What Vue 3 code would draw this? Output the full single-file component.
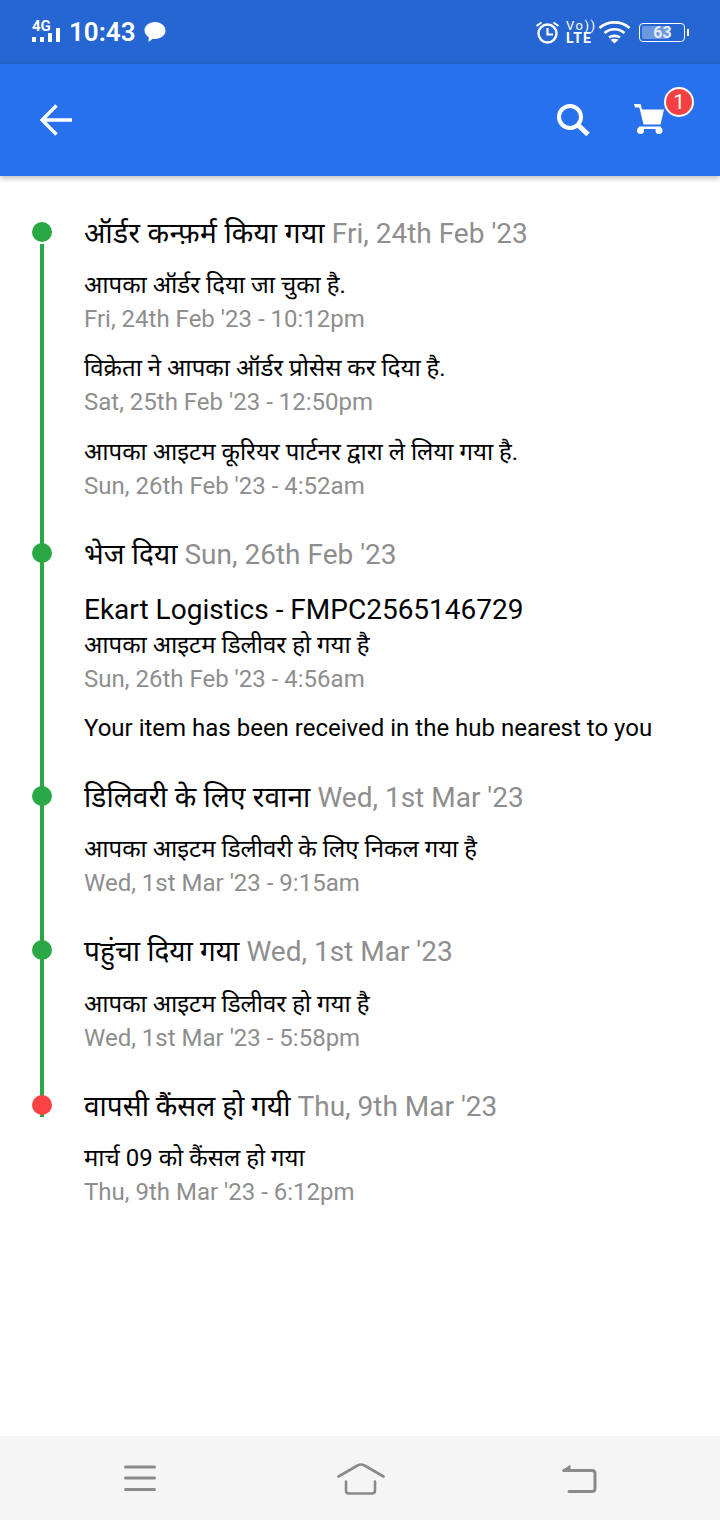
<script setup>
const stages = [
  { title: 'ऑर्डर कन्फ़र्म किया गया', track: 0.38, date: "Fri, 24th Feb '23", color: 'green', items: [
    { text: 'आपका ऑर्डर दिया जा चुका है.', time: "Fri, 24th Feb '23 - 10:12pm" },
    { text: 'विक्रेता ने आपका ऑर्डर प्रोसेस कर दिया है.', time: "Sat, 25th Feb '23 - 12:50pm" },
    { text: 'आपका आइटम कूरियर पार्टनर द्वारा ले लिया गया है.', time: "Sun, 26th Feb '23 - 4:52am" },
  ]},
  { title: 'भेज दिया', track: 0.1, date: "Sun, 26th Feb '23", color: 'green', courier: 'Ekart Logistics - FMPC2565146729', items: [
    { text: 'आपका आइटम डिलीवर हो गया है', time: "Sun, 26th Feb '23 - 4:56am" },
    { text: 'Your item has been received in the hub nearest to you' },
  ]},
  { title: 'डिलिवरी के लिए रवाना', track: 0.2, date: "Wed, 1st Mar '23", color: 'green', items: [
    { text: 'आपका आइटम डिलीवरी के लिए निकल गया है', time: "Wed, 1st Mar '23 - 9:15am" },
  ]},
  { title: 'पहुंचा दिया गया', track: 0.1, date: "Wed, 1st Mar '23", color: 'green', items: [
    { text: 'आपका आइटम डिलीवर हो गया है', time: "Wed, 1st Mar '23 - 5:58pm" },
  ]},
  { title: 'वापसी कैंसल हो गयी', track: 0, date: "Thu, 9th Mar '23", color: 'red', last: true, items: [
    { text: 'मार्च 09 को कैंसल हो गया', time: "Thu, 9th Mar '23 - 6:12pm" },
  ]},
]
</script>

<template>
  <div class="page">
    <div class="status">
      <div class="status-left">
        <svg width="30" height="30" viewBox="0 0 30 30">
          <text x="1" y="14" class="sig-t">4G</text>
          <rect x="1" y="20" width="4" height="5" fill="#fff"/>
          <rect x="9" y="20" width="4" height="5" fill="#fff"/>
          <rect x="17" y="16" width="4" height="9" fill="#fff"/>
          <rect x="25" y="11" width="4" height="14" fill="#fff"/>
        </svg>
        <span class="clock">10:43</span>
        <svg width="22" height="22" viewBox="0 0 22 22"><path d="M11 1c5.800 0 10.500 3.600 10.500 8.500S16.800 18 11 18c-.8 0-1.500-.1-2.200-.2L4.500 21l.3-4.800C2.200 14.700.5 12.300.5 9.500.5 4.600 5.200 1 11 1z" fill="#fff"/></svg>
      </div>
      <div class="status-right">
        <svg width="25" height="24" viewBox="0 0 25 24" fill="none" stroke="#fff">
          <circle cx="12.500" cy="13.500" r="9" stroke-width="2.400"/>
          <path d="M12.500 8v6.500H18" stroke-width="2.200"/>
          <path d="M1.500 6l5-3.500M23.500 6l-5-3.500" stroke-width="2"/>
        </svg>
        <div class="volte"><span class="vo">Vo))</span><span class="lte">LTE</span></div>
        <svg width="33" height="24" viewBox="0 0 33 24" fill="none" stroke="#fff" stroke-width="2.600">
          <path d="M1.500 8C10 .5 23 .5 31.500 8"/>
          <path d="M6.500 13c6-5 14-5 20 0"/>
          <path d="M11 17.500c3-2.200 8-2.200 11 0"/>
          <path d="M16.500 23.500l-4-3.700c2.500-1.500 5.500-1.500 8 0z" fill="#fff" stroke="none"/>
        </svg>
        <div class="battery">
          <div class="batt-body"><div class="batt-fill"></div><span class="batt-num">63</span></div>
          <div class="batt-tip"></div>
        </div>
      </div>
    </div>

    <header class="bar">
      <svg width="36" height="36" viewBox="0 0 36 36" fill="none" stroke="#fff" stroke-width="3.400">
        <path d="M4.500 18H34M18.500 3.500L4.100 18 18.500 32.500"/>
      </svg>
      <div class="bar-right">
        <svg width="36" height="36" viewBox="0 0 36 36" fill="none" stroke="#fff">
          <circle cx="15" cy="15" r="11" stroke-width="4"/>
          <path d="M23 23l10 9.500" stroke-width="5"/>
        </svg>
        <div class="cart">
          <svg width="34" height="34" viewBox="0 0 34 34" fill="#fff">
            <path d="M2 2h6.500L10 7.500h22L28.500 22.500H11.500L7.500 6 6.500 5.500H3z"/>
            <path d="M7 24.500h22V27H7z"/>
            <circle cx="8.500" cy="28.500" r="3.500"/><circle cx="27" cy="28.500" r="3.500"/>
          </svg>
          <span class="badge">1</span>
        </div>
      </div>
    </header>

    <main class="timeline">
      <section v-for="(s, i) in stages" :key="i" class="stage" :class="{ last: s.last }">
        <div class="rail">
          <span class="dot" :class="s.color"></span>
          <span class="line"></span>
        </div>
        <div class="content">
          <h2 class="head"><span :style="{ letterSpacing: s.track + 'px' }">{{ s.title }}</span> <span class="head-date">{{ s.date }}</span></h2>
          <p v-if="s.courier" class="courier">{{ s.courier }}</p>
          <div v-for="(it, j) in s.items" :key="j" class="item">
            <div class="item-text">{{ it.text }}</div>
            <div v-if="it.time" class="item-time">{{ it.time }}</div>
          </div>
        </div>
      </section>
    </main>

    <nav class="nav">
      <svg width="36" height="30" viewBox="0 0 36 30" fill="none" stroke="#8a8a8a" stroke-width="3" stroke-linecap="round">
        <path d="M3.500 4h29M3.500 15h29M3.500 26.500h29"/>
      </svg>
      <svg class="home" width="48" height="34" viewBox="0 0 48 34" fill="none" stroke="#8a8a8a" stroke-width="2.600" stroke-linecap="round" stroke-linejoin="round">
        <path d="M1.500 15.500L20.500 4.500c2.200-1.200 4.800-1.200 7 0L46.500 15.500"/>
        <path d="M9 20.500v9c0 2 1 3 3 3h23c2 0 3-1 3-3v-9"/>
      </svg>
      <svg width="38" height="32" viewBox="0 0 38 32" fill="none" stroke="#8a8a8a" stroke-width="3" stroke-linecap="round" stroke-linejoin="round">
        <path d="M4 8.500h28c2 0 3 1 3 3v15c0 2-1 3-3 3H9"/>
        <path d="M2.500 8.500L10 3.500v5z" fill="#8a8a8a" stroke="#8a8a8a" stroke-width="1"/>
      </svg>
    </nav>
  </div>
</template>

<style>
html, body { margin: 0; background: #fff; }
</style>

<style scoped>
.page {
  width: 720px;
  height: 1520px;
  display: flex;
  flex-direction: column;
  font-family: Roboto, "Noto Sans", sans-serif;
  color: #000;
  background: #fff;
}
.status {
  height: 64px;
  flex: none;
  background: #2566d2;
  display: flex;
  align-items: center;
  justify-content: space-between;
  padding: 0 31px;
  color: #fff;
}
.status-left, .status-right { display: flex; align-items: center; }
.status-left { gap: 8px; }
.status-right { gap: 6px; }
.sig-t { font: 700 15px Roboto, sans-serif; fill: #fff; }
.clock { font: 600 26px Roboto, sans-serif; }
.volte { display: flex; flex-direction: column; width: 26px; white-space: nowrap; }
.vo { font: 400 13px/13.500px Roboto, sans-serif; letter-spacing: 1.500px; }
.lte { font: 700 14px/13.500px Roboto, sans-serif; letter-spacing: 1.200px; }
.battery { display: flex; align-items: center; margin-left: 2px; }
.batt-body {
  position: relative;
  width: 46px;
  height: 19px;
  box-sizing: border-box;
  border: 1.500px solid #fff;
  border-radius: 4px;
  overflow: hidden;
  display: flex;
  align-items: center;
  justify-content: center;
}
.batt-fill { position: absolute; left: 2px; top: 2px; bottom: 2px; width: 27px; background: #6d97df; border-radius: 2px; }
.batt-num { position: relative; font: 700 16px Roboto, sans-serif; color: #e4ecfa; margin-left: 1px; }
.batt-tip { width: 2px; height: 7px; background: #fff; margin-left: 2px; }
.bar {
  height: 112px;
  flex: none;
  background: #2871ee;
  box-shadow: 0 2px 6px rgba(0,0,0,.28);
  display: flex;
  align-items: center;
  justify-content: space-between;
  padding: 0 54px 0 38px;
  position: relative;
}
.bar-right { display: flex; align-items: center; gap: 41px; }
.cart { position: relative; width: 34px; height: 34px; margin-top: -2px; }
.badge {
  position: absolute;
  top: -15px;
  left: 32px;
  width: 26px;
  height: 26px;
  border: 2px solid #fff;
  border-radius: 50%;
  background: #f44043;
  color: #fff;
  font: 400 20px/26px Roboto, sans-serif;
  text-align: center;
}
.timeline { flex: 1; padding-top: 37px; }
.stage { display: flex; }
.rail { width: 84px; flex: none; position: relative; }
.dot {
  display: block;
  width: 20px;
  height: 20px;
  border-radius: 50%;
  margin: 9px 0 0 32px;
  position: relative;
  z-index: 1;
}
.dot.green { background: #2aa845; }
.dot.red { background: #fb4344; }
.line { position: absolute; left: 40px; width: 4px; top: 0; bottom: 0; background: #2aa845; }
.stage:first-child .line { top: 31px; }
.stage.last .line { bottom: auto; height: 30.500px; }
.content { flex: 1; min-width: 0; padding-bottom: 31.500px; }
.stage.last .content { padding-bottom: 0; }
.head { margin: 0 0 -1px; padding-top: 1px; font-size: 28px; font-weight: 400; line-height: 40px; white-space: nowrap; }
.head-date { color: #8e8e8e; }
.courier { margin: 18px 0 0; font-size: 28px; line-height: 36px; }
.item { margin-top: 15.200px; }
.courier + .item { margin-top: 0; }
.item-text { font-size: 24px; line-height: 34px; white-space: nowrap; }
.item-time { font-size: 24px; line-height: 34px; color: #8e8e8e; }
.nav {
  height: 84px;
  flex: none;
  background: #f5f5f5;
  display: flex;
  align-items: center;
  justify-content: space-between;
  padding: 0 122px;
  box-sizing: border-box;
}
.home { margin-left: 4px; }
</style>
